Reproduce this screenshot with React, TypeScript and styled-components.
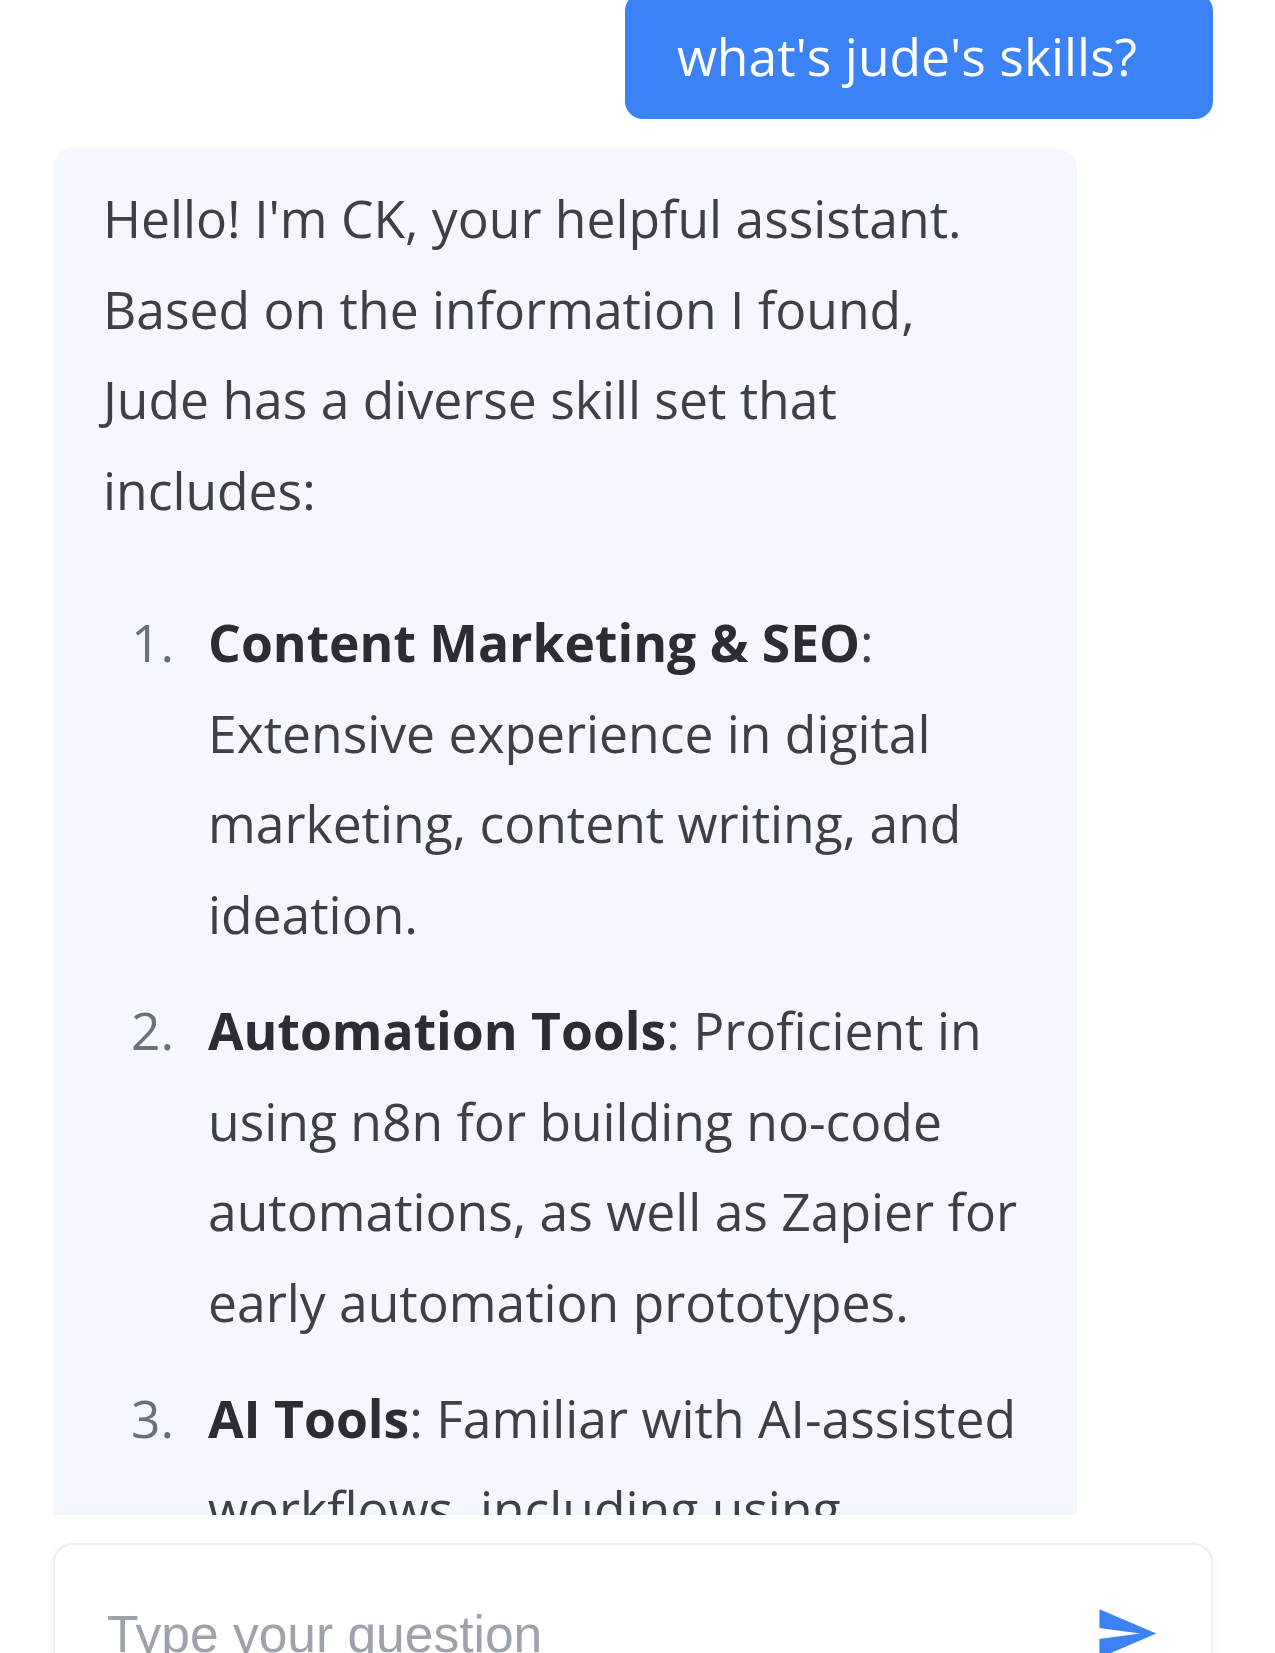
import React from "react";
import styled, { createGlobalStyle } from "styled-components";
import { MdSend } from "react-icons/md";

const GlobalStyle = createGlobalStyle`
  html, body {
    margin: 0;
    padding: 0;
    background: #ffffff;
    overflow: hidden;
  }
  body {
    font-family: "Open Sans", "Noto Sans", sans-serif;
  }
  * { box-sizing: border-box; }
`;

const Page = styled.div`
  width: 1275px;
  height: 1653px;
  padding: 0 62px 0 53px;
  display: flex;
  flex-direction: column;
  overflow: hidden;
`;

const Messages = styled.div`
  height: 1515px;
  flex: 0 0 1515px;
  overflow: hidden;
  display: flex;
  flex-direction: column;
  gap: 29px;
`;

const Spacer = styled.div`
  margin-top: -36px;
`;

const UserBubble = styled.div`
  align-self: flex-end;
  background: #3b82f6;
  color: #ffffff;
  font-size: 51.6px;
  line-height: 76px;
  padding: 25px 76px 25px 52px;
  border-radius: 18px;
`;

const BotBubble = styled.div`
  align-self: flex-start;
  width: 1024px;
  background: #f5f7fe;
  color: #3d4048;
  font-size: 51.6px;
  line-height: 90.5px;
  padding: 25px 56px 40px 50px;
  border-radius: 20px;
  flex-shrink: 0;
`;

const Para = styled.p`
  margin: 0;
`;

const List = styled.ol`
  list-style: none;
  margin: 62px 0 0 0;
  padding: 0;
  display: flex;
  flex-direction: column;
  gap: 26px;
`;

const Item = styled.li`
  display: grid;
  grid-template-columns: 105px 1fr;
`;

const Num = styled.span`
  padding-left: 28px;
  color: #6b7079;
`;

const Strong = styled.strong`
  font-weight: 700;
  color: #2a2d33;
`;

const InputBar = styled.div`
  margin-top: 28px;
  flex-shrink: 0;
  display: flex;
  align-items: center;
  gap: 20px;
  padding: 56px 52px 56px 52px;
  border: 2px solid #eceef1;
  border-radius: 20px;
  background: #ffffff;
  box-shadow: 0 2px 8px rgba(0, 0, 0, 0.05);
`;

const Input = styled.input`
  flex: 1;
  min-width: 0;
  border: none;
  outline: none;
  background: transparent;
  padding: 0;
  font-family: "Liberation Sans", Arial, sans-serif;
  font-size: 51.5px;
  color: #374151;
  &::placeholder {
    color: #9ea3ab;
  }
`;

const SendButton = styled.button`
  border: none;
  background: transparent;
  padding: 0;
  margin: 0;
  display: flex;
  color: #3b82f6;
  cursor: pointer;
`;

type Skill = { title: string; lines: string };

const skills: Skill[] = [
  {
    title: "Content Marketing & SEO",
    lines: "Extensive experience in digital marketing, content writing, and ideation.",
  },
  {
    title: "Automation Tools",
    lines:
      "Proficient in using n8n for building no-code automations, as well as Zapier for early automation prototypes.",
  },
  {
    title: "AI Tools",
    lines: "Familiar with AI-assisted workflows, including using ChatGPT and other tools for content ideation and drafting.",
  },
];

export default function App() {
  return (
    <>
      <GlobalStyle />
      <Page>
        <Messages>
          <Spacer />
          <UserBubble>what's jude's skills?</UserBubble>
          <BotBubble>
            <Para>
              Hello! I'm CK, your helpful assistant. Based on the information I found, Jude has a diverse skill set
              that includes:
            </Para>
            <List>
              {skills.map((s, i) => (
                <Item key={s.title}>
                  <Num>{i + 1}.</Num>
                  <span>
                    <Strong>{s.title}</Strong>: {s.lines}
                  </span>
                </Item>
              ))}
            </List>
          </BotBubble>
        </Messages>
        <InputBar>
          <Input placeholder="Type your question" />
          <SendButton aria-label="Send">
            <MdSend size={65} />
          </SendButton>
        </InputBar>
      </Page>
    </>
  );
}
